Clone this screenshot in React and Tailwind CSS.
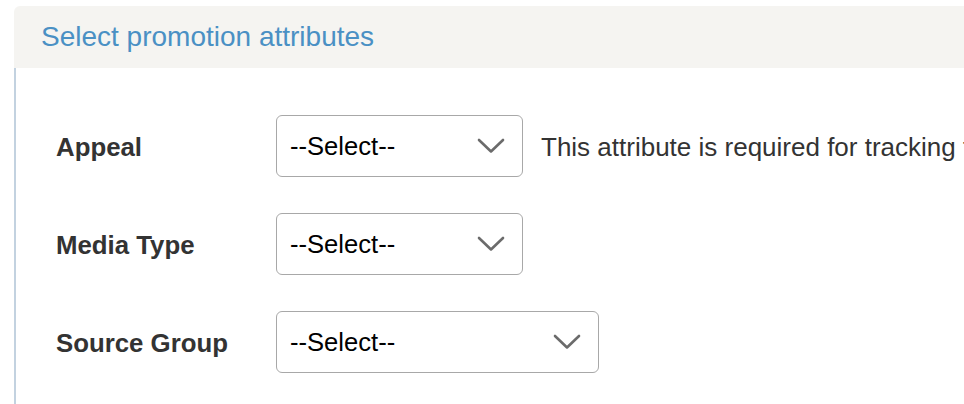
import React from 'react';

// 促销属性选择面板
const FIELDS = [
    { label: 'Appeal', width: 'w-[247px]', hint: 'This attribute is required for tracking the response of this promotion' },
    { label: 'Media Type', width: 'w-[247px]' },
    { label: 'Source Group', width: 'w-[323px]' },
];

const Chevron = () => (
    <svg width="28" height="16" viewBox="0 0 28 16" fill="none" className="shrink-0">
        <path d="M2 2 L14 13.5 L26 2" stroke="#6b6b6b" strokeWidth="2.6" strokeLinecap="round" strokeLinejoin="round" />
    </svg>
);

const SelectBox = ({ width }) => (
    <div className={`${width} h-[62px] shrink-0 flex items-center justify-between pl-[13px] pr-[17px] border-[1.5px] border-[#a8a8a8] rounded-[6px] bg-white`}>
        <span className="text-[25.6px] leading-none pt-[2px] text-black">--Select--</span>
        <Chevron />
    </div>
);

const App = () => {
    return (
        <div className="w-[964px] h-[404px] overflow-hidden bg-white font-['Liberation_Sans',Arial,sans-serif]">
            <div className="ml-[14px] mt-[6px] flex flex-col">
                {/* 标题栏 */}
                <div className="h-[62px] bg-[#f5f4f1] rounded-tl-[6px] flex items-center pl-[27px]">
                    <h2 className="text-[28px] text-[#4a90c4] whitespace-nowrap">Select promotion attributes</h2>
                </div>

                {/* 表单区域 */}
                <div className="border-l-2 border-[#c3d2e0] pt-[47px] pl-[40px] pb-[40px] flex flex-col gap-[36px]">
                    {FIELDS.map(f => (
                        <div key={f.label} className="flex items-center">
                            <label className="w-[220px] shrink-0 text-[25.8px] leading-none pt-[3px] font-bold text-[#333]">{f.label}</label>
                            <SelectBox width={f.width} />
                            {f.hint && (
                                <span className="ml-[18px] text-[26px] leading-none pt-[2px] text-[#333] whitespace-nowrap">{f.hint}</span>
                            )}
                        </div>
                    ))}
                </div>
            </div>
        </div>
    );
};

export default App;
